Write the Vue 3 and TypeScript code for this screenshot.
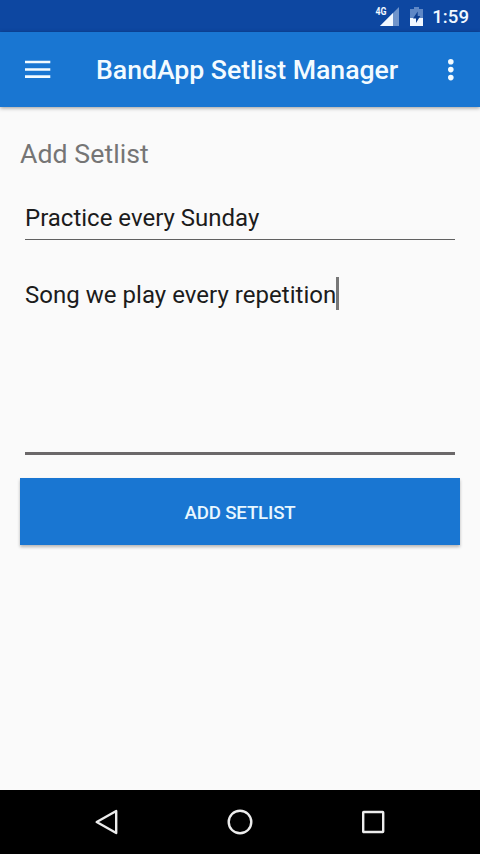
<script setup lang="ts">
import { ref } from 'vue'

const clock = ref<string>('1:59')
const setlistName = ref<string>('Practice every Sunday')
const setlistNotes = ref<string>('Song we play every repetition')
</script>

<template>
  <div class="screen">
    <header class="status-bar">
      <svg class="signal" width="24" height="20" viewBox="0 0 24 20">
        <path d="M24 1V20H5Z" fill="#6f94cb" />
        <path d="M18 7V20H5Z" fill="#f1f8ff" />
        <text x="0.5" y="9" class="network" textLength="11" lengthAdjust="spacingAndGlyphs">4G</text>
      </svg>
      <svg class="battery" width="13" height="20" viewBox="0 0 13 20">
        <path d="M0 3H4V1H9V3H13V12H0Z" fill="#5f88c6" />
        <path d="M0 12H13V20H0Z" fill="#f1f8ff" />
        <path d="M7.7 5.5L3 12.5H6V17L10.3 10H7.7Z" fill="#0d3f91" />
      </svg>
      <span class="clock">{{ clock }}</span>
    </header>

    <nav class="app-bar">
      <svg class="menu" width="26" height="20" viewBox="0 0 26 20">
        <path d="M0 2H25.3M0 9.5H25.3M0 16.7H25.3" stroke="#f3fbff" stroke-width="2.7" />
      </svg>
      <h1 class="title">BandApp Setlist Manager</h1>
      <svg class="more" width="6" height="22" viewBox="0 0 6 22">
        <g fill="#f3fbff">
          <circle cx="2.8" cy="2.8" r="2.8" />
          <circle cx="2.8" cy="10.6" r="2.8" />
          <circle cx="2.8" cy="18.6" r="2.8" />
        </g>
      </svg>
    </nav>

    <main class="content">
      <h2 class="heading">Add Setlist</h2>
      <div class="field name-field"><span class="value name">{{ setlistName }}</span></div>
      <div class="field notes-field">
        <span class="value notes">{{ setlistNotes }}</span><i class="caret"></i>
      </div>
      <button class="submit" type="button">ADD SETLIST</button>
    </main>

    <footer class="nav-bar">
      <svg width="28" height="28" viewBox="0 0 28 28">
        <path d="M23.2 3V25L3.7 14Z" class="glyph" />
      </svg>
      <svg width="28" height="28" viewBox="0 0 28 28">
        <circle cx="14" cy="14" r="11.3" class="glyph" />
      </svg>
      <svg width="28" height="28" viewBox="0 0 28 28">
        <rect x="4.2" y="4" width="20" height="20" rx="0.5" class="glyph" />
      </svg>
    </footer>
  </div>
</template>

<style>
body {
  margin: 0;
}
</style>

<style scoped>
.screen {
  box-sizing: border-box;
  display: flex;
  flex-direction: column;
  width: 480px;
  height: 854px;
  overflow: hidden;
  background: #fafafa;
  font-family: Roboto, "Liberation Sans", sans-serif;
}

.status-bar {
  display: flex;
  flex: none;
  box-sizing: border-box;
  height: 32px;
  padding: 6px 11px 0 0;
  justify-content: flex-end;
  background: #0d47a1;
}

.signal {
  margin-right: 11px;
  overflow: visible;
}

.network {
  fill: #f1f8ff;
  font-size: 11.5px;
  font-weight: 700;
}

.battery {
  margin-right: 9px;
}

.clock {
  color: #f1f8ff;
  font-size: 18.67px;
  font-weight: 500;
  line-height: 22px;
}

.app-bar {
  display: flex;
  flex: none;
  box-sizing: border-box;
  height: 74.67px;
  align-items: center;
  padding: 1px 26px 0 25px;
  background: #1976d2;
  box-shadow: 0 1px 4px rgba(0, 0, 0, 0.4);
}

.title {
  flex: 1;
  margin: 0 0 0 45px;
  color: #f3fbff;
  font-size: 26.67px;
  font-weight: 500;
  letter-spacing: -0.03px;
  line-height: 32px;
  white-space: nowrap;
}

.content {
  display: flex;
  flex: 1;
  flex-direction: column;
  padding: 31px 20px 0;
}

.heading {
  margin: 0;
  color: #757575;
  font-size: 26.67px;
  font-weight: 400;
  letter-spacing: 0.06px;
  line-height: 32px;
}

.field {
  display: flex;
  box-sizing: border-box;
  margin: 0 5px;
  color: #1c1c1c;
  font-size: 24px;
  line-height: 32px;
  white-space: nowrap;
}

.name-field {
  height: 70px;
  padding-top: 32px;
  border-bottom: 1px solid #616161;
}

.notes-field {
  height: 215px;
  padding-top: 39px;
  border-bottom: 3px solid #6b6869;
}

.notes {
  letter-spacing: 0.03px;
}

.caret {
  width: 3px;
  height: 33px;
  margin-top: -2px;
  background: #777;
}

.submit {
  height: 67px;
  margin-top: 23px;
  padding: 3px 0 0;
  border: 0;
  background: #1976d2;
  box-shadow: 0 2px 3px rgba(0, 0, 0, 0.28);
  color: #e8f7ff;
  font-family: inherit;
  font-size: 18.67px;
  font-weight: 500;
  letter-spacing: -0.15px;
}

.nav-bar {
  display: flex;
  flex: none;
  height: 64px;
  align-items: center;
  justify-content: center;
  gap: 105px;
  background: #000;
}

.glyph {
  fill: none;
  stroke: #ececec;
  stroke-width: 2.4;
  stroke-linejoin: round;
}
</style>
